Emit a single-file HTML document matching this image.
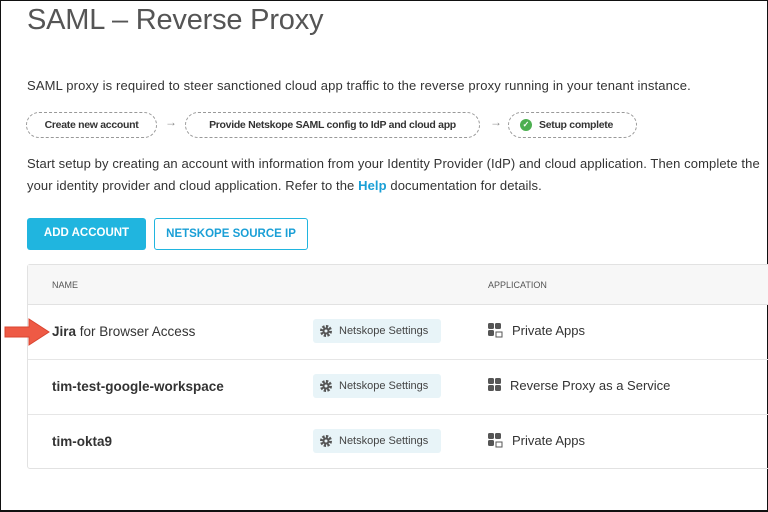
<!DOCTYPE html>
<html><head><style>
*{margin:0;padding:0;box-sizing:border-box}
html,body{width:768px;height:512px;overflow:hidden;background:#fff}
body{position:relative;font-family:"Liberation Sans",sans-serif;color:#333;border:1px solid #111;border-bottom:2px solid #111}
.abs{position:absolute;white-space:nowrap}
h1{position:absolute;left:26px;top:3px;font-size:29px;font-weight:normal;color:#555;letter-spacing:-0.2px}
.p{font-size:13px;color:#333}
.step{position:absolute;top:111px;height:26px;border:1px dashed #999;border-radius:13px;font-size:10.5px;letter-spacing:-0.3px;font-weight:bold;color:#333;line-height:24px;padding:0 10px;white-space:nowrap;text-align:center}
.arr{position:absolute;top:114px;font-size:12px;color:#888}
.btn{position:absolute;top:217px;height:32px;border-radius:3px;font-size:11.5px;font-weight:bold;line-height:30px;text-align:center;white-space:nowrap}
.tbl{position:absolute;left:26px;top:263px;width:745px;height:205px;border:1px solid #e2e2e2;border-radius:3px}
.hdr{position:absolute;left:0;top:0;width:100%;height:40px;background:#f7f7f7;border-bottom:1px solid #e2e2e2;font-size:9px;color:#555}
.row{position:absolute;left:0;width:100%;height:55px;border-bottom:1px solid #e6e6e6}
.nm{position:absolute;left:24px;top:19px;font-size:13.5px;font-weight:bold;color:#333;white-space:nowrap}
.ns{position:absolute;left:285px;top:14px;width:128px;height:24px;background:#e8f4f8;border-radius:3px;font-size:11px;color:#444;line-height:24px;padding-left:26px;white-space:nowrap}
.ns svg{position:absolute;left:6px;top:5px}
.ap{position:absolute;left:460px;top:18px;font-size:13px;color:#333;padding-left:24px;white-space:nowrap}
.ap svg{position:absolute;left:0;top:0}
</style></head><body>
<h1>SAML – Reverse Proxy</h1>
<div class="abs p" style="left:26px;top:77px;letter-spacing:0.15px">SAML proxy is required to steer sanctioned cloud app traffic to the reverse proxy running in your tenant instance.</div>
<div class="step" style="left:25px;width:131px">Create new account</div>
<div class="arr" style="left:164px">→</div>
<div class="step" style="left:184px;width:295px">Provide Netskope SAML config to IdP and cloud app</div>
<div class="arr" style="left:489px">→</div>
<div class="step" style="left:507px;width:129px;padding-left:30px;text-align:left"><span style="position:absolute;left:11px;top:6px;width:12px;height:12px;border-radius:50%;background:#4caf50;color:#fff;font-size:8px;line-height:12px;text-align:center;letter-spacing:0">✓</span>Setup complete</div>
<div class="abs p" style="left:26px;top:155px;letter-spacing:0.1px">Start setup by creating an account with information from your Identity Provider (IdP) and cloud application. Then complete the</div>
<div class="abs p" style="left:26px;top:177px;letter-spacing:0.1px">your identity provider and cloud application. Refer to the <span style="color:#1a9fd6;font-weight:bold">Help</span> documentation for details.</div>
<div class="btn" style="left:26px;width:119px;background:#20b5df;color:#fff">ADD ACCOUNT</div>
<div class="btn" style="left:153px;width:154px;border:1px solid #20b5df;color:#1a9fd6;background:#fff">NETSKOPE SOURCE IP</div>
<div class="tbl">
<div class="hdr"><span class="abs" style="left:24px;top:15px">NAME</span><span class="abs" style="left:460px;top:15px">APPLICATION</span></div>
<div class="row" style="top:40px"><div class="nm" style="font-weight:normal"><b>Jira</b> for Browser Access</div>
<div class="ns"><svg width="14" height="14" viewBox="0 0 14 14"><circle cx="7" cy="7" r="4.5" fill="none" stroke="#555" stroke-width="3" stroke-dasharray="2.2 1.3"/><circle cx="7" cy="7" r="3.5" fill="#555"/><circle cx="7" cy="7" r="1.5" fill="#e8f4f8"/></svg>Netskope Settings</div>
<div class="ap"><svg width="18" height="16"><rect x="0" y="0" width="6" height="6" rx="1.5" fill="#555"/><rect x="7" y="0" width="6" height="6" rx="1.5" fill="#555"/><rect x="0" y="7" width="6" height="6" rx="1.5" fill="#555"/><rect x="8" y="9" width="6" height="5" fill="none" stroke="#555"/></svg>Private Apps</div></div>
<div class="row" style="top:95px"><div class="nm">tim-test-google-workspace</div>
<div class="ns"><svg width="14" height="14" viewBox="0 0 14 14"><circle cx="7" cy="7" r="4.5" fill="none" stroke="#555" stroke-width="3" stroke-dasharray="2.2 1.3"/><circle cx="7" cy="7" r="3.5" fill="#555"/><circle cx="7" cy="7" r="1.5" fill="#e8f4f8"/></svg>Netskope Settings</div>
<div class="ap" style="padding-left:22px"><svg width="18" height="16"><rect x="0" y="0" width="6" height="6" rx="1.5" fill="#555"/><rect x="7" y="0" width="6" height="6" rx="1.5" fill="#555"/><rect x="0" y="7" width="6" height="6" rx="1.5" fill="#555"/><rect x="7" y="7" width="6" height="6" rx="1.5" fill="#555"/></svg>Reverse Proxy as a Service</div></div>
<div class="row" style="top:150px;border-bottom:none"><div class="nm">tim-okta9</div>
<div class="ns"><svg width="14" height="14" viewBox="0 0 14 14"><circle cx="7" cy="7" r="4.5" fill="none" stroke="#555" stroke-width="3" stroke-dasharray="2.2 1.3"/><circle cx="7" cy="7" r="3.5" fill="#555"/><circle cx="7" cy="7" r="1.5" fill="#e8f4f8"/></svg>Netskope Settings</div>
<div class="ap"><svg width="18" height="16"><rect x="0" y="0" width="6" height="6" rx="1.5" fill="#555"/><rect x="7" y="0" width="6" height="6" rx="1.5" fill="#555"/><rect x="0" y="7" width="6" height="6" rx="1.5" fill="#555"/><rect x="8" y="9" width="6" height="5" fill="none" stroke="#555"/></svg>Private Apps</div></div>
</div>
<svg class="abs" style="left:2px;top:316px" width="48" height="30" viewBox="0 0 48 30"><path d="M2 10 L26 10 L26 2 L46 15 L26 28 L26 20 L2 20 Z" fill="#ee5a45" stroke="#d94430" stroke-width="1"/></svg>
</body></html>
